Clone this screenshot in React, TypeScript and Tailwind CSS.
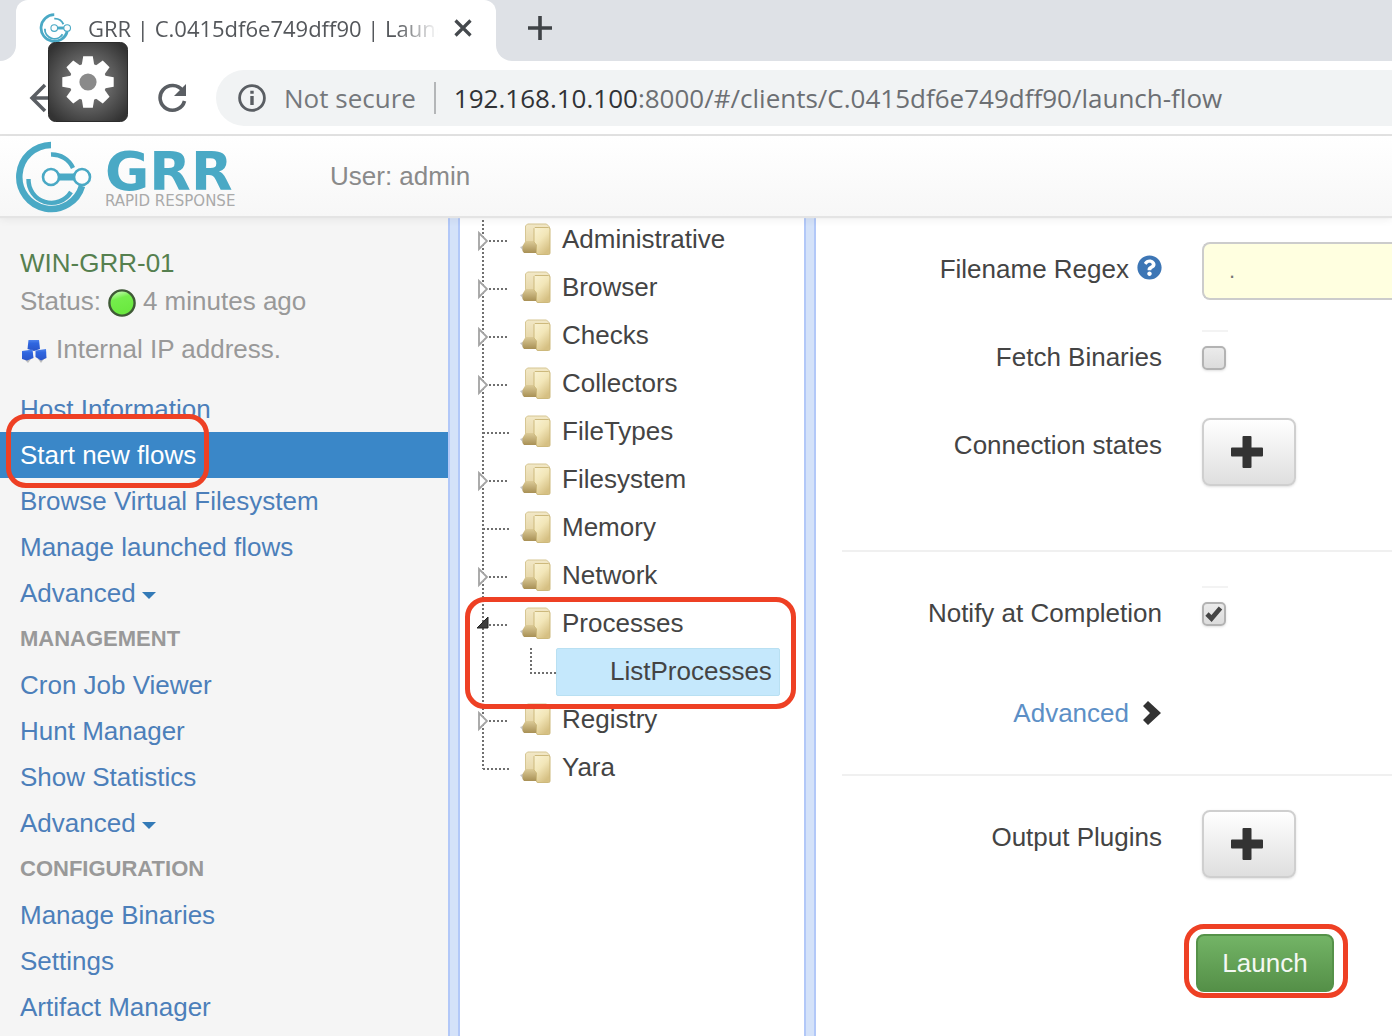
import type { ReactNode } from "react";
import { FaQuestionCircle } from "react-icons/fa";

function GrrMark({ className }: { className: string }) {
  return (
    <svg viewBox="0 0 78 72" className={className} fill="none" stroke="#4aa9c5" aria-hidden="true">
      <path d="M36 4A32 32 0 1 0 67 45" strokeWidth="6.5" />
      <path d="M36 13.5A23 23 0 0 1 58 27" strokeWidth="4.4" />
      <path d="M13.500 38A23 23 0 0 0 56 51" strokeWidth="4.4" />
      <path d="M44 36H60" strokeWidth="7" />
      <circle cx="36" cy="36" r="8" strokeWidth="2.6" fill="#fdfdfd" />
      <circle cx="67" cy="36" r="8" strokeWidth="2.6" fill="#fdfdfd" />
    </svg>
  );
}

function Gear() {
  return (
    <svg viewBox="0 0 80 80" className="size-20" aria-hidden="true">
      <defs>
        <radialGradient id="gearBack" cx="0.5" cy="0.5" r="0.62">
          <stop offset="0" stopColor="#8c8c8c" />
          <stop offset="0.55" stopColor="#5c5c5c" />
          <stop offset="1" stopColor="#333333" />
        </radialGradient>
      </defs>
      <rect x="0.5" y="0.5" width="79" height="79" rx="7" fill="url(#gearBack)" stroke="#2c2c2c" />
      <g fill="#fff">
        <circle cx="40" cy="40" r="18.6" />
        {[0, 45, 90, 135, 180, 225, 270, 315].map((a) => (
          <path key={a} d="M33.600 24L35.200 14.300H44.800L46.400 24Z" transform={`rotate(${a} 40 40)`} />
        ))}
      </g>
      <circle cx="40" cy="40" r="8.6" fill="#8a8a8a" />
    </svg>
  );
}

function Folder() {
  return (
    <svg viewBox="0 0 32 34" className="mt-0.5 h-[34px] w-8 shrink-0" aria-hidden="true">
      <defs>
        <linearGradient id="folderBack" x1="0" y1="0" x2="0" y2="1">
          <stop offset="0" stopColor="#f2e8c6" />
          <stop offset="1" stopColor="#e3d2a0" />
        </linearGradient>
        <linearGradient id="folderFoot" x1="0" y1="0" x2="0" y2="1">
          <stop offset="0" stopColor="#dccb98" />
          <stop offset="1" stopColor="#a89055" />
        </linearGradient>
        <linearGradient id="folderFront" x1="0" y1="0" x2="0.6" y2="1">
          <stop offset="0" stopColor="#faf3d4" />
          <stop offset="0.5" stopColor="#f2e6b8" />
          <stop offset="1" stopColor="#d6c083" />
        </linearGradient>
      </defs>
      <path d="M0 25L5 31H10L3 24Z" fill="#c4c4c4" />
      <path d="M7.500 2H26.500L29.500 5V27H5.500V4Z" fill="url(#folderBack)" stroke="#d6c693" />
      <path d="M5.500 19H13.500L16 22V31H4L2.500 29V24Z" fill="url(#folderFoot)" />
      <path d="M15 5.500H28.500Q30 5.500 30 7V31Q30 32.500 28.500 32.500H18Q16.500 32.500 16.500 31V23L14 20V6.500Z" fill="url(#folderFront)" stroke="#cdb97c" />
    </svg>
  );
}

type Branch = "closed" | "open" | "leaf" | "last";

function BranchLines({ kind }: { kind: Branch }) {
  return (
    <svg viewBox="0 0 44 48" className="h-12 w-11 shrink-0" fill="none" aria-hidden="true">
      <path d={kind === "last" ? "M7 0V25" : "M7 0V48"} stroke="#6f6f6f" strokeWidth="2" strokeDasharray="2 2" />
      <path d={kind === "leaf" || kind === "last" ? "M7 25H33" : "M13 25H33"} stroke="#6f6f6f" strokeWidth="2" strokeDasharray="2 2" />
      {kind === "closed" && <path d="M3 17V33L11 25Z" fill="#fff" stroke="#a3a3a3" strokeWidth="1.800" />}
      {kind === "open" && <path d="M1 28H12V17Z" fill="#3c3c3c" stroke="#222" />}
    </svg>
  );
}

function TreeRow({ name, kind }: { name: string; kind: Branch }) {
  return (
    <div className="flex h-12 items-start">
      <BranchLines kind={kind} />
      <a href="#" className="flex items-start gap-2.5 pt-1 text-[#444]">
        <Folder />
        <span className="pt-0.5 leading-[34px]">{name}</span>
      </a>
    </div>
  );
}

function Highlight({ className }: { className: string }) {
  return <span aria-hidden="true" className={`pointer-events-none absolute z-10 rounded-[20px] border-[5px] border-[#ee4024] ${className}`} />;
}

function NavLink({ children, caret }: { children: ReactNode; caret?: boolean }) {
  return (
    <li>
      <a href="#" className="flex h-[46px] items-center gap-1.5 px-5 text-[#4c7fba]">
        {children}
        {caret && <span className="mt-1 border-x-7 border-t-7 border-x-transparent border-t-[#337ab7]" />}
      </a>
    </li>
  );
}

function NavHeading({ children }: { children: ReactNode }) {
  return <li className="flex h-[46px] items-center px-5 text-[22px] font-bold text-[#999]">{children}</li>;
}

function Splitter() {
  return <div className="w-3 shrink-0 border-x-2 border-[#b2c8f8] bg-[#d4e2f9]" />;
}

function Row({ label, id, icon, children }: { label: string; id: string; icon?: ReactNode; children: ReactNode }) {
  return (
    <div className="flex min-h-[58px] items-start gap-10">
      <div className="flex w-80 shrink-0 items-center justify-end gap-2 leading-[54px]">
        <label htmlFor={id}>{label}</label>
        {icon}
      </div>
      {children}
    </div>
  );
}

function Tick({ id, checked }: { id: string; checked?: boolean }) {
  return (
    <div className="relative h-14 w-[26px] border-t-2 border-[#f3f3f3] pt-3.5">
      <input
        id={id}
        type="checkbox"
        defaultChecked={checked}
        className="peer block size-6 appearance-none rounded-[5px] border-2 border-[#b3b3b3] bg-linear-to-b from-[#ebebeb] to-[#dcdcdc] shadow-sm"
      />
      <svg viewBox="0 0 24 24" className="pointer-events-none invisible absolute top-3.5 left-0 size-6 peer-checked:visible" fill="none" aria-hidden="true">
        <path d="M5 12L9.500 16.500L18.500 6" stroke="#444" strokeWidth="4.600" />
      </svg>
    </div>
  );
}

function PlusButton({ id }: { id: string }) {
  return (
    <button id={id} type="button" className="flex h-[68px] w-[94px] items-center justify-center rounded-lg border-2 border-[#cfcfcf] bg-linear-to-b from-white to-[#dfdfdf] pr-1 shadow-sm">
      <svg viewBox="0 0 32 32" className="size-8" aria-hidden="true">
        <path d="M12.500 0H19.500Q20.500 0 20.500 1V11.500H31Q32 11.500 32 12.500V19.500Q32 20.500 31 20.500H20.500V31Q20.500 32 19.500 32H12.500Q11.500 32 11.500 31V20.500H1Q0 20.500 0 19.500V12.500Q0 11.500 1 11.500H11.500V1Q11.500 0 12.500 0Z" fill="#333" />
      </svg>
    </button>
  );
}

const upper: [string, Branch][] = [
  ["Administrative", "closed"],
  ["Browser", "closed"],
  ["Checks", "closed"],
  ["Collectors", "closed"],
  ["FileTypes", "leaf"],
  ["Filesystem", "closed"],
  ["Memory", "leaf"],
  ["Network", "closed"],
];

export default function App() {
  return (
    <div className="relative flex min-h-screen flex-col overflow-hidden bg-white font-['Liberation_Sans',Arial,sans-serif] text-[26px] leading-[38px] text-[#444]">
      <div className="flex h-[61px] font-['Open_Sans','Noto_Sans',sans-serif]">
        <div className="w-4 shrink-0 rounded-br-2xl bg-[#dee1e6]" />
        <div className="w-[480px] shrink-0 bg-[#dee1e6]">
          <div className="flex h-[61px] items-center rounded-t-xl bg-white px-[23px] pb-1.5">
            <GrrMark className="h-[30px] w-[33px] shrink-0" />
            <span className="ml-4 w-[350px] overflow-hidden text-[22px] whitespace-nowrap text-[#54575b] [mask-image:linear-gradient(to_right,black_88%,transparent_100%)]">
              GRR | C.0415df6e749dff90 | Launch
            </span>
            <button type="button" aria-label="Close tab" className="ml-4">
              <svg viewBox="0 0 18 18" className="size-[18px]" stroke="#45494d" strokeWidth="3.200" aria-hidden="true">
                <path d="M1.500 1.500L16.500 16.500M16.500 1.500L1.500 16.500" />
              </svg>
            </button>
          </div>
        </div>
        <div className="flex flex-1 items-center rounded-bl-2xl bg-[#dee1e6] pb-1.5 pl-8">
          <button type="button" aria-label="New tab">
            <svg viewBox="0 0 24 24" className="size-6" stroke="#3f4347" strokeWidth="3.600" aria-hidden="true">
              <path d="M12 0V24M0 12H24" />
            </svg>
          </button>
        </div>
      </div>

      <div className="flex h-[75px] items-center border-b-2 border-[#e2e2e2] pl-[29px] font-['Open_Sans','Noto_Sans',sans-serif]">
        <button type="button" aria-label="Back">
          <svg viewBox="0 0 30 30" className="size-[30px]" fill="none" stroke="#5a5e63" strokeWidth="3.500" aria-hidden="true">
            <path d="M16 2L3 15L16 28M3 15H29" />
          </svg>
        </button>
        <button type="button" aria-label="Reload" className="ml-[98px]">
          <svg viewBox="0 0 30 30" className="size-[30px]" fill="none" stroke="#5a5e63" strokeWidth="3.600" aria-hidden="true">
            <path d="M25.500 7.500A12.400 12.400 0 1 0 27.500 18" />
            <path d="M29 1V13H17Z" fill="#5a5e63" stroke="none" />
          </svg>
        </button>
        <div className="ml-[29px] flex h-14 flex-1 items-center rounded-l-full bg-[#f1f3f4] pl-[22px] whitespace-nowrap">
          <svg viewBox="0 0 28 28" className="size-7 shrink-0" fill="none" stroke="#5a5e63" strokeWidth="2.800" aria-hidden="true">
            <circle cx="14" cy="14" r="12.400" />
            <path d="M14 12V21M14 6.800V9.800" strokeWidth="3.400" />
          </svg>
          <span className="ml-[18px] text-[26px] text-[#75787c]">Not secure</span>
          <span className="mx-[18px] h-8 w-0.5 bg-[#b4b6b8]" />
          <span className="text-[26px] text-[#6c6f73]">
            <span className="text-[#303236]">192.168.10.100</span>:8000/#/clients/C.0415df6e749dff90/launch-flow
          </span>
        </div>
      </div>

      <header className="z-10 flex h-20 items-center bg-linear-to-b from-white to-[#f7f7f7] pl-[15px] shadow-[0_2px_1px_#e4e4e4,0_4px_8px_rgba(0,0,0,0.06)]">
        <a href="#" aria-label="GRR Rapid Response" className="flex w-[222px] items-center gap-3 pt-0.5">
          <GrrMark className="h-[72px] w-[78px] shrink-0" />
          <span className="flex flex-col whitespace-nowrap font-['DejaVu_Sans',sans-serif]">
            <span className="text-[54px] leading-[48px] font-bold text-[#4aa9c5]">GRR</span>
            <span className="text-[15px] leading-[10px] text-[#aaa]">RAPID RESPONSE</span>
          </span>
        </a>
        <span className="ml-[93px] text-[#8a8a8a]">User: admin</span>
      </header>

      <div className="flex flex-1">
        <aside className="w-[448px] shrink-0 bg-[#f5f5f5] pt-7">
          <div className="px-5 text-[#999]">
            <h1 className="leading-[38px] text-[#55804f]">WIN-GRR-01</h1>
            <p className="flex items-center gap-[7px]">
              Status:
              <svg viewBox="0 0 28 28" className="mt-1 size-7" aria-hidden="true">
                <defs>
                  <linearGradient id="online" x1="0" y1="0" x2="0.300" y2="1">
                    <stop offset="0" stopColor="#e4ffd9" />
                    <stop offset="0.400" stopColor="#74ee4b" />
                    <stop offset="1" stopColor="#6ae83f" />
                  </linearGradient>
                </defs>
                <circle cx="14" cy="14" r="12.600" fill="url(#online)" stroke="#3f5a36" strokeWidth="2.400" />
              </svg>
              4 minutes ago
            </p>
            <p className="mt-2.5 flex items-center gap-2">
              <svg viewBox="0 0 28 28" className="mt-1 size-7" aria-hidden="true">
                <defs>
                  <linearGradient id="cube" x1="0" y1="0" x2="0" y2="1">
                    <stop offset="0" stopColor="#4f83ec" />
                    <stop offset="0.3" stopColor="#2f66e0" />
                    <stop offset="1" stopColor="#2a55c8" />
                  </linearGradient>
                </defs>
                <path d="M4 22L8 26L11 22M18 22L21 26L24 22" fill="#bdbdbd" />
                <path d="M8.500 3H19L20 12L14 14L7.500 12Z" fill="url(#cube)" />
                <path d="M2 14L12.500 12.500L13.500 21L7 23.500L2 22Z" fill="url(#cube)" />
                <path d="M15.500 13.500L26 12L26.500 21L21 23.500L15.500 20Z" fill="url(#cube)" />
              </svg>
              Internal IP address.
            </p>
          </div>
          <nav className="mt-[18px]">
            <ul>
              <NavLink>Host Information</NavLink>
              <li className="relative">
                <a href="#" aria-current="page" className="flex h-[46px] items-center bg-[#3a87c8] px-5 text-white">
                  Start new flows
                </a>
                <Highlight className="-top-[18px] left-1.5 h-[74px] w-[203px]" />
              </li>
              <NavLink>Browse Virtual Filesystem</NavLink>
              <NavLink>Manage launched flows</NavLink>
              <NavLink caret>Advanced</NavLink>
              <NavHeading>MANAGEMENT</NavHeading>
              <NavLink>Cron Job Viewer</NavLink>
              <NavLink>Hunt Manager</NavLink>
              <NavLink>Show Statistics</NavLink>
              <NavLink caret>Advanced</NavLink>
              <NavHeading>CONFIGURATION</NavHeading>
              <NavLink>Manage Binaries</NavLink>
              <NavLink>Settings</NavLink>
              <NavLink>Artifact Manager</NavLink>
            </ul>
          </nav>
        </aside>

        <Splitter />

        <section aria-label="Flows" className="w-[344px] shrink-0 pl-4">
          <ul>
            {upper.map(([name, kind]) => (
              <li key={name}>
                <TreeRow name={name} kind={kind} />
              </li>
            ))}
            <li className="relative">
              <TreeRow name="Processes" kind="open" />
              <div className="flex h-12">
                <svg viewBox="0 0 80 48" className="h-12 w-20 shrink-0" fill="none" stroke="#6f6f6f" strokeWidth="2" strokeDasharray="2 2" aria-hidden="true">
                  <path d="M7 0V48M55 0V25H80" />
                </svg>
                <a href="#" className="flex h-12 items-center rounded-xs border border-[#b9e0f2] bg-[#c5e8fc] pr-[7px] pb-0.5 pl-[53px] text-[#444]">
                  ListProcesses
                </a>
              </div>
              <Highlight className="-top-[3px] -left-[11px] h-28 w-[331px]" />
            </li>
            <li>
              <TreeRow name="Registry" kind="closed" />
            </li>
            <li>
              <TreeRow name="Yara" kind="last" />
            </li>
          </ul>
        </section>

        <Splitter />

        <main className="min-w-0 flex-1 pt-[26px] pl-[26px]">
          <form onSubmit={(e) => e.preventDefault()}>
            <div className="flex flex-col gap-[30px]">
              <Row label="Filename Regex" id="regex" icon={<FaQuestionCircle className="mb-1 size-[25px] text-[#3d76b5]" aria-hidden="true" />}>
                <input
                  id="regex"
                  type="text"
                  defaultValue="."
                  className="h-[58px] min-w-0 flex-1 rounded-l-lg border-2 border-r-0 border-[#ccc] bg-[#ffffe0] pl-[25px] text-[22px] text-[#777]"
                />
              </Row>
              <Row label="Fetch Binaries" id="fetch">
                <Tick id="fetch" />
              </Row>
              <Row label="Connection states" id="states">
                <PlusButton id="states" />
              </Row>
            </div>
            <hr className="mt-16 mb-[34px] border-t-2 border-[#f0f0f0]" />
            <Row label="Notify at Completion" id="notify">
              <Tick id="notify" checked />
            </Row>
            <div className="mt-[42px] flex w-80 items-center justify-end gap-[13px] leading-[54px]">
              <a href="#" className="text-[#5c8fc6]">
                Advanced
              </a>
              <svg viewBox="0 0 20 24" className="h-6 w-5" aria-hidden="true">
                <path d="M6 0L19 12L6 24L1 19L8 12L1 5Z" fill="#333" />
              </svg>
            </div>
            <hr className="my-[34px] border-t-2 border-[#f0f0f0]" />
            <Row label="Output Plugins" id="plugins">
              <PlusButton id="plugins" />
            </Row>
            <div className="relative mt-14 ml-[354px] w-[138px]">
              <button type="submit" className="h-[58px] w-full rounded-lg border-2 border-[#559249] bg-linear-to-b from-[#73b466] to-[#559048] text-[#f4f8f3]">
                Launch
              </button>
              <Highlight className="-top-2.5 -right-3.5 -left-3 h-[74px]" />
            </div>
          </form>
        </main>
      </div>

      <button type="button" aria-label="Settings" className="absolute top-[42px] left-12 z-20">
        <Gear />
      </button>
    </div>
  );
}
